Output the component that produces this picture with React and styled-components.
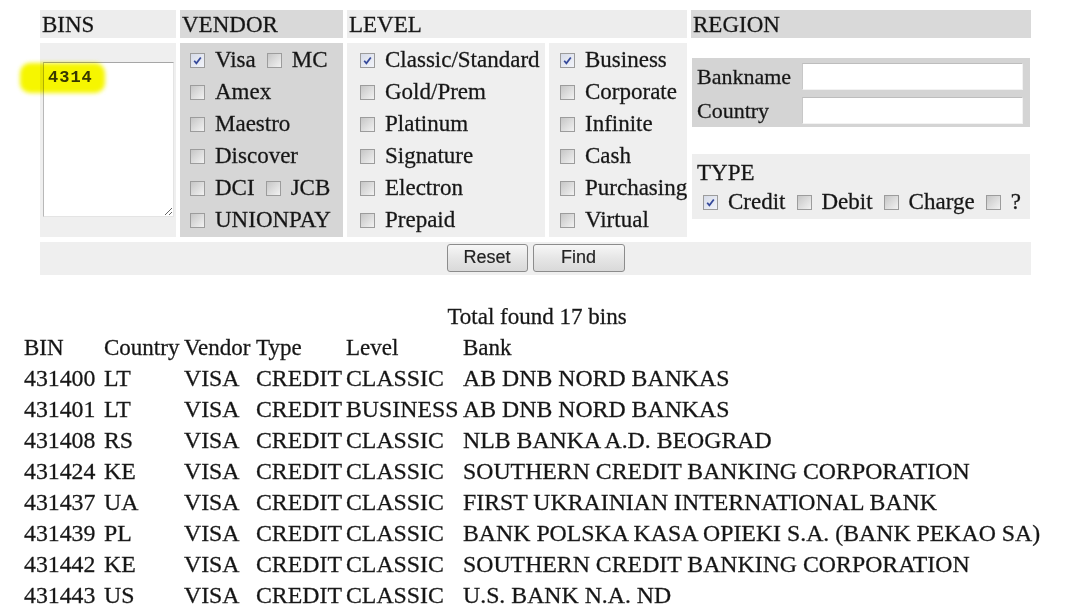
import React from "react";
import styled, { createGlobalStyle } from "styled-components";

const GlobalStyle = createGlobalStyle`
  html, body {
    margin: 0;
    padding: 0;
    overflow: hidden;
    background: #ffffff;
  }
  body {
    font-family: "Liberation Serif", "Times New Roman", serif;
    color: #141414;
    -webkit-text-stroke: 0.3px #2a2a2a;
  }
`;

const Page = styled.div`
  width: 1076px;
  height: 604px;
  padding-top: 10px;
  box-sizing: border-box;
`;

const FilterGrid = styled.div`
  display: grid;
  grid-template-columns: 136px 163px 198px 138px 340px;
  grid-template-rows: 28px 194px 33px;
  column-gap: 4px;
  row-gap: 5px;
  margin-left: 40px;
  width: 991px;
  font-size: 23px;
`;

const HeadCell = styled.div`
  grid-column: ${(p) => p.$span || "auto"};
  background: ${(p) => (p.$dark ? "#d9d9d9" : "#ededed")};
  line-height: 30px;
  padding-left: 2px;
`;

const BinsCell = styled.div`
  position: relative;
  background: #efefef;
  padding: 19px 1px 0 3px;
`;

const BinsArea = styled.textarea`
  display: block;
  width: 131px;
  height: 155px;
  box-sizing: border-box;
  margin: 0;
  padding: 5px 4px;
  border: 1px solid;
  border-color: #a6a6a6 #e4e4e4 #e4e4e4 #b8b8b8;
  background: #ffffff;
  font-family: "Liberation Mono", "Courier New", monospace;
  font-size: 17px;
  font-weight: bold;
  letter-spacing: 1px;
  color: #3a3a2a;
  -webkit-text-stroke: 0;
  outline: none;
`;

const Marker = styled.span`
  position: absolute;
  left: -20px;
  top: 20px;
  width: 85px;
  height: 30px;
  border-radius: 10px;
  background: #f6f600;
  filter: blur(2px);
  mix-blend-mode: multiply;
  pointer-events: none;
`;

const OptionCol = styled.div`
  background: ${(p) => (p.$dark ? "#d6d6d6" : "#efefef")};
  padding: 1px 0 0 ${(p) => p.$pad || 10}px;
`;

const OptionRow = styled.div`
  display: flex;
  align-items: center;
  height: 32px;
  white-space: nowrap;
`;

const Check = styled.span`
  display: inline-flex;
  align-items: center;
  justify-content: center;
  flex: none;
  width: 15px;
  height: 15px;
  box-sizing: border-box;
  margin-left: ${(p) => (p.$first ? 0 : 11)}px;
  margin-right: 10px;
  border: 1px solid #9c9c9c;
  background: ${(p) =>
    p.$checked
      ? "linear-gradient(135deg, #d6dbe8, #f2f4fa)"
      : "linear-gradient(135deg, #c6c6c6, #f2f2f2)"};
`;

const RegionCell = styled.div`
  background: #ffffff;
  padding: 15px 1px 0 1px;
`;

const NameBox = styled.div`
  display: grid;
  grid-template-columns: 105px 1fr;
  row-gap: 7px;
  align-items: center;
  background: #d4d4d4;
  padding: 5px 7px 3px 5px;
  font-size: 22px;
`;

const NameInput = styled.input`
  height: 27px;
  box-sizing: border-box;
  border: 1px solid;
  border-color: #bdbdbd #f2f2f2 #f2f2f2 #c8c8c8;
  background: #ffffff;
  margin: 0;
  outline: none;
`;

const TypeBox = styled.div`
  margin-top: 27px;
  background: #eeeeee;
  padding: 6px 0 0 11px;
  height: 65px;
  box-sizing: border-box;
`;

const TypeTitle = styled.div`
  line-height: 26px;
  margin-left: -6px;
`;

const ButtonBar = styled.div`
  grid-column: 1 / -1;
  background: #efefef;
  display: flex;
  justify-content: center;
  align-items: center;
  gap: 5px;
`;

const Button = styled.button`
  width: ${(p) => p.$w}px;
  height: 28px;
  margin-top: -2px;
  border: 1px solid #8c8c8c;
  border-radius: 3px;
  background: linear-gradient(#f7f7f7, #e6e6e6 50%, #d9d9d9);
  font-family: "Liberation Sans", Arial, sans-serif;
  font-size: 18px;
  color: #222222;
  -webkit-text-stroke: 0.2px #333;
  padding: 0;
`;

const Results = styled.div`
  margin-top: 26px;
  font-size: 23px;
`;

const Caption = styled.div`
  text-align: center;
  line-height: 31px;
  padding-right: 2px;
`;

const Table = styled.div`
  margin-left: 24px;
  display: grid;
  grid-template-columns: 80px 80px 72px 90px 117px auto;
  grid-auto-rows: 31px;
  align-items: center;
  white-space: nowrap;
`;

const Cell = styled.div`
  font-size: ${(p) => (p.$head ? 23 : 23.8)}px;
`;

const CheckMark = ({ checked, first }) => (
  <Check $checked={checked} $first={first}>
    {checked && (
      <svg width="11" height="11" viewBox="0 0 10 10">
        <path d="M2 5.2 L4 7.6 L8 2.2" fill="none" stroke="#34489a" strokeWidth="1.6" />
      </svg>
    )}
  </Check>
);

const vendorRows = [
  [["Visa", true], ["MC", false]],
  [["Amex", false]],
  [["Maestro", false]],
  [["Discover", false]],
  [["DCI", false], ["JCB", false]],
  [["UNIONPAY", false]],
];

const levelA = [
  ["Classic/Standard", true],
  ["Gold/Prem", false],
  ["Platinum", false],
  ["Signature", false],
  ["Electron", false],
  ["Prepaid", false],
];

const levelB = [
  ["Business", true],
  ["Corporate", false],
  ["Infinite", false],
  ["Cash", false],
  ["Purchasing", false],
  ["Virtual", false],
];

const types = [
  ["Credit", true],
  ["Debit", false],
  ["Charge", false],
  ["?", false],
];

const rows = [
  ["431400", "LT", "VISA", "CREDIT", "CLASSIC", "AB DNB NORD BANKAS"],
  ["431401", "LT", "VISA", "CREDIT", "BUSINESS", "AB DNB NORD BANKAS"],
  ["431408", "RS", "VISA", "CREDIT", "CLASSIC", "NLB BANKA A.D. BEOGRAD"],
  ["431424", "KE", "VISA", "CREDIT", "CLASSIC", "SOUTHERN CREDIT BANKING CORPORATION"],
  ["431437", "UA", "VISA", "CREDIT", "CLASSIC", "FIRST UKRAINIAN INTERNATIONAL BANK"],
  ["431439", "PL", "VISA", "CREDIT", "CLASSIC", "BANK POLSKA KASA OPIEKI S.A. (BANK PEKAO SA)"],
  ["431442", "KE", "VISA", "CREDIT", "CLASSIC", "SOUTHERN CREDIT BANKING CORPORATION"],
  ["431443", "US", "VISA", "CREDIT", "CLASSIC", "U.S. BANK N.A. ND"],
];

const headers = ["BIN", "Country", "Vendor", "Type", "Level", "Bank"];

const OptionList = ({ items, dark, pad }) => (
  <OptionCol $dark={dark} $pad={pad}>
    {items.map(([label, checked]) => (
      <OptionRow key={label}>
        <CheckMark checked={checked} first />
        {label}
      </OptionRow>
    ))}
  </OptionCol>
);

export default function App() {
  return (
    <Page>
      <GlobalStyle />
      <FilterGrid>
        <HeadCell>BINS</HeadCell>
        <HeadCell $dark>VENDOR</HeadCell>
        <HeadCell $span="3 / 5">LEVEL</HeadCell>
        <HeadCell $dark>REGION</HeadCell>

        <BinsCell>
          <BinsArea readOnly value="4314" />
          <Marker />
        </BinsCell>

        <OptionCol $dark>
          {vendorRows.map((group, i) => (
            <OptionRow key={i}>
              {group.map(([label, checked], j) => (
                <React.Fragment key={label}>
                  <CheckMark checked={checked} first={j === 0} />
                  {label}
                </React.Fragment>
              ))}
            </OptionRow>
          ))}
        </OptionCol>

        <OptionList items={levelA} pad={13} />
        <OptionList items={levelB} pad={11} />

        <RegionCell>
          <NameBox>
            <span>Bankname</span>
            <NameInput />
            <span>Country</span>
            <NameInput />
          </NameBox>
          <TypeBox>
            <TypeTitle>TYPE</TypeTitle>
            <OptionRow>
              {types.map(([label, checked], j) => (
                <React.Fragment key={label}>
                  <CheckMark checked={checked} first={j === 0} />
                  {label}
                </React.Fragment>
              ))}
            </OptionRow>
          </TypeBox>
        </RegionCell>

        <ButtonBar>
          <Button $w={81}>Reset</Button>
          <Button $w={92}>Find</Button>
        </ButtonBar>
      </FilterGrid>

      <Results>
        <Caption>Total found 17 bins</Caption>
        <Table>
          {headers.map((h) => (
            <Cell key={h} $head>
              {h}
            </Cell>
          ))}
          {rows.map((r) =>
            r.map((v, i) => <Cell key={r[0] + i}>{v}</Cell>)
          )}
        </Table>
      </Results>
    </Page>
  );
}
